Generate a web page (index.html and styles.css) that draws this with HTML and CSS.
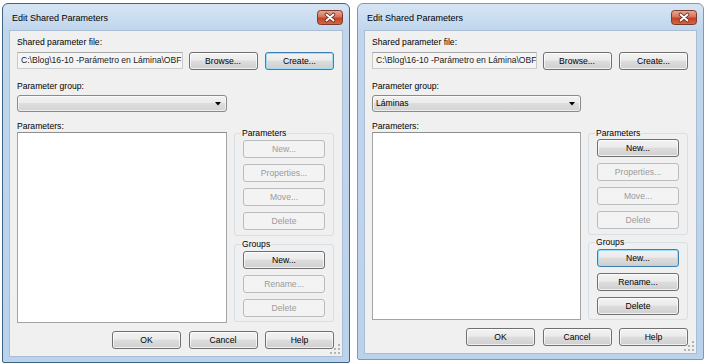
FILE: index.html
```html
<!DOCTYPE html>
<html lang="es">
<head>
<meta charset="utf-8">
<title>Edit Shared Parameters</title>
<link rel="stylesheet" href="styles.css">
</head>
<body>
  <div class="dialog">
    <div class="titlebar">
      <span class="title">Edit Shared Parameters</span>
      <span class="close">
        <svg width="26" height="15" viewBox="0 0 26 15">
          <defs>
            <linearGradient id="cg1" x1="0" y1="0" x2="0" y2="1">
              <stop offset="0" stop-color="#e9ab98"/>
              <stop offset="0.45" stop-color="#d8735c"/>
              <stop offset="0.55" stop-color="#c24428"/>
              <stop offset="1" stop-color="#d7683f"/>
            </linearGradient>
          </defs>
          <rect x="0.5" y="0.5" width="25" height="14" rx="3" fill="url(#cg1)" stroke="#7c3a2c"/>
          <path d="M9.5 4.5 L16.5 10.5 M16.5 4.5 L9.5 10.5" stroke="#5a2418" stroke-width="3.6" stroke-linecap="round"/>
          <path d="M9.5 4.5 L16.5 10.5 M16.5 4.5 L9.5 10.5" stroke="#ffffff" stroke-width="2" stroke-linecap="round"/>
        </svg>
      </span>
    </div>
    <div class="client">
      <div class="label label--file">Shared parameter file:</div>
      <div class="file-row">
        <div class="field">C:\Blog\16-10 -Parámetro en Lámina\OBF</div>
        <button class="btn btn--browse">Browse...</button>
        <button class="btn btn--focus">Create...</button>
      </div>
      <div class="label label--group">Parameter group:</div>
      <div class="combo">
        <span class="combo-text"></span>
        <svg class="arrow" width="6" height="4" viewBox="0 0 6 4"><path d="M0 0 H6 L3 3.5 Z" fill="#000"/></svg>
      </div>
      <div class="main">
        <div class="list-col">
          <div class="label">Parameters:</div>
          <div class="list"></div>
        </div>
        <div class="side">
          <fieldset class="group">
            <legend>Parameters</legend>
            <button class="btn btn--wide" disabled>New...</button>
            <button class="btn btn--wide" disabled>Properties...</button>
            <button class="btn btn--wide" disabled>Move...</button>
            <button class="btn btn--wide" disabled>Delete</button>
          </fieldset>
          <fieldset class="group group--second">
            <legend>Groups</legend>
            <button class="btn btn--wide">New...</button>
            <button class="btn btn--wide" disabled>Rename...</button>
            <button class="btn btn--wide" disabled>Delete</button>
          </fieldset>
        </div>
      </div>
      <div class="footer">
        <button class="btn">OK</button>
        <button class="btn">Cancel</button>
        <button class="btn">Help</button>
      </div>
      <svg class="grip" width="11" height="11" viewBox="0 0 11 11">
        <g fill="#b4b4b4">
          <rect x="8" y="0" width="2" height="2"/>
          <rect x="4" y="4" width="2" height="2"/><rect x="8" y="4" width="2" height="2"/>
          <rect x="0" y="8" width="2" height="2"/><rect x="4" y="8" width="2" height="2"/><rect x="8" y="8" width="2" height="2"/>
        </g>
      </svg>
    </div>
  </div>

  <div class="dialog dialog--inactive">
    <div class="titlebar">
      <span class="title">Edit Shared Parameters</span>
      <span class="close">
        <svg width="26" height="15" viewBox="0 0 26 15">
          <defs>
            <linearGradient id="cg2" x1="0" y1="0" x2="0" y2="1">
              <stop offset="0" stop-color="#e9ab98"/>
              <stop offset="0.45" stop-color="#d8735c"/>
              <stop offset="0.55" stop-color="#c24428"/>
              <stop offset="1" stop-color="#d7683f"/>
            </linearGradient>
          </defs>
          <rect x="0.5" y="0.5" width="25" height="14" rx="3" fill="url(#cg2)" stroke="#7c3a2c"/>
          <path d="M9.5 4.5 L16.5 10.5 M16.5 4.5 L9.5 10.5" stroke="#5a2418" stroke-width="3.6" stroke-linecap="round"/>
          <path d="M9.5 4.5 L16.5 10.5 M16.5 4.5 L9.5 10.5" stroke="#ffffff" stroke-width="2" stroke-linecap="round"/>
        </svg>
      </span>
    </div>
    <div class="client">
      <div class="label label--file">Shared parameter file:</div>
      <div class="file-row">
        <div class="field">C:\Blog\16-10 -Parámetro en Lámina\OBF</div>
        <button class="btn btn--browse">Browse...</button>
        <button class="btn">Create...</button>
      </div>
      <div class="label label--group">Parameter group:</div>
      <div class="combo">
        <span class="combo-text">Láminas</span>
        <svg class="arrow" width="6" height="4" viewBox="0 0 6 4"><path d="M0 0 H6 L3 3.5 Z" fill="#000"/></svg>
      </div>
      <div class="main">
        <div class="list-col">
          <div class="label">Parameters:</div>
          <div class="list list--short"></div>
        </div>
        <div class="side">
          <fieldset class="group group--tight">
            <legend>Parameters</legend>
            <button class="btn btn--wide">New...</button>
            <button class="btn btn--wide" disabled>Properties...</button>
            <button class="btn btn--wide" disabled>Move...</button>
            <button class="btn btn--wide" disabled>Delete</button>
          </fieldset>
          <fieldset class="group group--second group--close">
            <legend>Groups</legend>
            <button class="btn btn--wide btn--focus">New...</button>
            <button class="btn btn--wide">Rename...</button>
            <button class="btn btn--wide">Delete</button>
          </fieldset>
        </div>
      </div>
      <div class="footer">
        <button class="btn">OK</button>
        <button class="btn">Cancel</button>
        <button class="btn">Help</button>
      </div>
      <svg class="grip" width="11" height="11" viewBox="0 0 11 11">
        <g fill="#b4b4b4">
          <rect x="8" y="0" width="2" height="2"/>
          <rect x="4" y="4" width="2" height="2"/><rect x="8" y="4" width="2" height="2"/>
          <rect x="0" y="8" width="2" height="2"/><rect x="4" y="8" width="2" height="2"/><rect x="8" y="8" width="2" height="2"/>
        </g>
      </svg>
    </div>
  </div>
</body>
</html>
```
FILE: styles.css
```css
* { box-sizing: border-box; }

html, body { height: 100%; }

body {
  margin: 0;
  padding: 3px 0 0 2px;
  background: #ffffff;
  display: flex;
  align-items: flex-start;
  gap: 7px;
  font-family: "Liberation Sans", Arial, sans-serif;
  font-size: 8.6px;
  color: #000;
  overflow: hidden;
}

.dialog {
  width: 348px;
  height: 360px;
  border: 1px solid #3f6582;
  border-radius: 6px 6px 2px 2px;
  background: linear-gradient(#d6e5f4, #c0d6ed 26px, #bad2eb);
  padding: 0 6px 5px;
  display: flex;
  flex-direction: column;
  flex: none;
}

.dialog--inactive {
  width: 347px;
  height: 357px;
  border-color: #8a97a4;
}

.titlebar {
  height: 26px;
  flex: none;
  display: flex;
  justify-content: space-between;
  align-items: flex-start;
}

.title {
  font-size: 9px;
  line-height: 11px;
  padding: 9px 0 0 3px;
  color: #000;
}

.close {
  margin-top: 6px;
  width: 26px;
  height: 15px;
  display: block;
}
.close svg { display: block; }

.client {
  flex: 1;
  background: #f0f0f0;
  border: 1px solid #a9bdd3;
  padding: 6px 8px 0 7px;
  display: flex;
  flex-direction: column;
  position: relative;
}

.label {
  line-height: 11px;
  height: 11px;
  white-space: nowrap;
}

.label--file { margin-bottom: 4px; }
.label--group { margin: 11px 0 3px; }

.file-row {
  display: flex;
  align-items: flex-start;
  height: 18px;
}

.field {
  flex: 1;
  min-width: 0;
  height: 17px;
  margin-right: 6px;
  background: #f5f5f5;
  border: 1px solid #cacaca;
  border-top-color: #a8a8a8;
  padding-left: 3px;
  line-height: 15px;
  white-space: nowrap;
  overflow: hidden;
  color: #1a1a1a;
}

.btn {
  font: inherit;
  color: #000;
  width: 69px;
  height: 18px;
  padding: 0;
  line-height: 16px;
  text-align: center;
  border: 1px solid #707070;
  border-radius: 3px;
  background: linear-gradient(#f3f3f3, #ebebeb 45%, #dddddd 50%, #cfcfcf);
  box-shadow: inset 0 0 0 1px rgba(255, 255, 255, 0.7);
  flex: none;
}

.btn--browse { margin-right: 7.5px; }

.btn--focus {
  border-color: #3c7fb1;
  box-shadow: inset 0 0 0 1px #9fdcf7;
}

.btn:disabled {
  color: #9a9a9a;
  border-color: #b9bdc0;
  background: #f3f3f3;
  box-shadow: none;
}

.btn--wide { width: 82px; }

.combo {
  width: calc(100% - 107px);
  height: 17px;
  border: 1px solid #8a8a8a;
  border-radius: 3px;
  background: linear-gradient(#f2f2f2, #ebebeb 45%, #dddddd 50%, #d3d3d3);
  box-shadow: inset 0 0 0 1px rgba(255, 255, 255, 0.6);
  display: flex;
  align-items: center;
  justify-content: space-between;
  padding: 0 5px 0 3px;
}

.combo-text { line-height: 15px; }
.arrow { display: block; }

.main {
  margin-top: 9px;
  display: flex;
  gap: 7px;
}

.list-col {
  flex: 1;
  min-width: 0;
  display: flex;
  flex-direction: column;
}

.list {
  height: 191px;
  background: #ffffff;
  border: 1px solid #a4a4a4;
  border-top-color: #8e8e8e;
}

.list--short { height: 188px; }

.side {
  width: 100px;
  flex: none;
  padding-top: 7px;
  display: flex;
  flex-direction: column;
}

.group {
  margin: 0;
  min-width: 0;
  padding: 1px 8px 5px;
  border: 1px solid #d5dfe5;
  border-radius: 3px;
  display: flex;
  flex-direction: column;
  gap: 6px;
}

.group legend {
  padding: 0 1px;
  margin-left: -2px;
  line-height: 11px;
  font-size: 8.6px;
  color: #000;
}

.group--second {
  margin-top: 3px;
  padding-bottom: 4px;
}

.group--tight { padding-top: 0; }
.group--close { margin-top: 2px; }

.footer {
  margin-top: 8px;
  display: flex;
  justify-content: flex-end;
  gap: 7.5px;
}

.grip {
  position: absolute;
  right: 1px;
  bottom: 1px;
}
```
